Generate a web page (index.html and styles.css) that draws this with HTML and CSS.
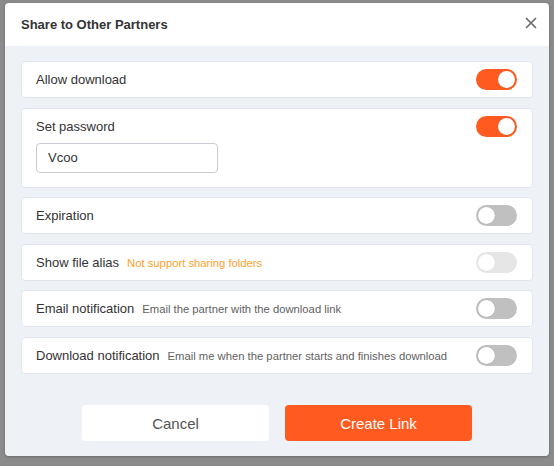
FILE: index.html
```html
<!DOCTYPE html>
<html>
<head>
<meta charset="utf-8">
<link rel="stylesheet" href="styles.css">
</head>
<body>
<div class="dialog">
  <div class="header">
    <span class="title">Share to Other Partners</span>
    <svg class="close" width="12" height="12" viewBox="0 0 12 12"><path d="M1.5 1.5 L10.5 10.5 M10.5 1.5 L1.5 10.5" stroke="#6b6b6b" stroke-width="1.7" stroke-linecap="round"/></svg>
  </div>
  <div class="body">
    <div class="cards">
      <div class="card">
        <span class="label">Allow download</span>
        <span class="toggle on"><span class="knob"></span></span>
      </div>
      <div class="card card-tall">
        <div class="row">
          <span class="label">Set password</span>
          <span class="toggle on"><span class="knob"></span></span>
        </div>
        <div class="input">Vcoo</div>
      </div>
      <div class="card">
        <span class="label">Expiration</span>
        <span class="toggle"><span class="knob"></span></span>
      </div>
      <div class="card">
        <span class="label">Show file alias<span class="warn">Not support sharing folders</span></span>
        <span class="toggle disabled"><span class="knob"></span></span>
      </div>
      <div class="card">
        <span class="label">Email notification<span class="desc">Email the partner with the download link</span></span>
        <span class="toggle"><span class="knob"></span></span>
      </div>
      <div class="card">
        <span class="label">Download notification<span class="desc">Email me when the partner starts and finishes download</span></span>
        <span class="toggle"><span class="knob"></span></span>
      </div>
    </div>
    <div class="actions">
      <button class="btn btn-cancel">Cancel</button>
      <button class="btn btn-primary">Create Link</button>
    </div>
  </div>
</div>
</body>
</html>
```
FILE: styles.css
```css
html, body {
  margin: 0;
  padding: 0;
}
body {
  background: #8b8b8b;
  font-family: "Liberation Sans", Arial, sans-serif;
  width: 554px;
  height: 466px;
  overflow: hidden;
}
.dialog {
  margin: 3px 0 0 5px;
  width: 544px;
  height: 453px;
  border-radius: 4px;
  overflow: hidden;
  display: flex;
  flex-direction: column;
  box-shadow: 0 1px 3px rgba(0,0,0,0.25);
}
.header {
  height: 43px;
  flex: none;
  background: #ffffff;
  display: flex;
  align-items: center;
  justify-content: space-between;
  padding: 0 12px 0 16px;
}
.title {
  font-size: 13px;
  font-weight: bold;
  color: #333;
}
.close {
  display: block;
  margin-top: -4px;
}
.body {
  flex: 1;
  background: #eef1f5;
  padding: 15px 16px 15px 16px;
  display: flex;
  flex-direction: column;
}
.cards {
  display: flex;
  flex-direction: column;
  gap: 9.5px;
}
.card {
  box-sizing: border-box;
  height: 37px;
  background: #fff;
  border: 1px solid #e1e6ee;
  border-radius: 4px;
  display: flex;
  align-items: center;
  justify-content: space-between;
  padding: 0 15px 0 14px;
}
.card-tall {
  height: 80px;
  flex-direction: column;
  align-items: stretch;
  justify-content: flex-start;
  padding-top: 7px;
}
.row {
  display: flex;
  align-items: center;
  justify-content: space-between;
  height: 21px;
}
.label {
  font-size: 13px;
  color: #333;
  display: flex;
  align-items: baseline;
}
.desc {
  font-size: 11.25px;
  color: #5f5f5f;
  margin-left: 8px;
}
.warn {
  font-size: 11.25px;
  color: #ffa12c;
  margin-left: 8px;
}
.input {
  box-sizing: border-box;
  margin-top: 6px;
  width: 182px;
  height: 30px;
  border: 1px solid #c7ccd4;
  border-radius: 4px;
  font-size: 13px;
  color: #333;
  display: flex;
  align-items: center;
  padding-left: 11px;
}
.toggle {
  box-sizing: border-box;
  width: 41px;
  height: 21px;
  border-radius: 11px;
  background: #c0c0c0;
  display: flex;
  align-items: center;
  padding: 0 2px;
  flex: none;
}
.toggle .knob {
  width: 17px;
  height: 17px;
  border-radius: 50%;
  background: #fff;
  box-shadow: 0 0 1px rgba(0,0,0,0.3);
}
.toggle.on {
  background: #ff5a1f;
  justify-content: flex-end;
}
.toggle.disabled {
  background: #e6e6e6;
}
.toggle.disabled .knob {
  box-shadow: 0 0 1px rgba(0,0,0,0.12);
}
.actions {
  margin-top: auto;
  display: flex;
  justify-content: center;
  gap: 16px;
}
.btn {
  width: 187px;
  height: 36px;
  border: none;
  border-radius: 4px;
  font-family: "Liberation Sans", Arial, sans-serif;
  font-size: 15px;
  padding: 0;
}
.btn-cancel {
  background: #fff;
  color: #555;
}
.btn-primary {
  background: #ff5a1f;
  color: #fff;
}
```
